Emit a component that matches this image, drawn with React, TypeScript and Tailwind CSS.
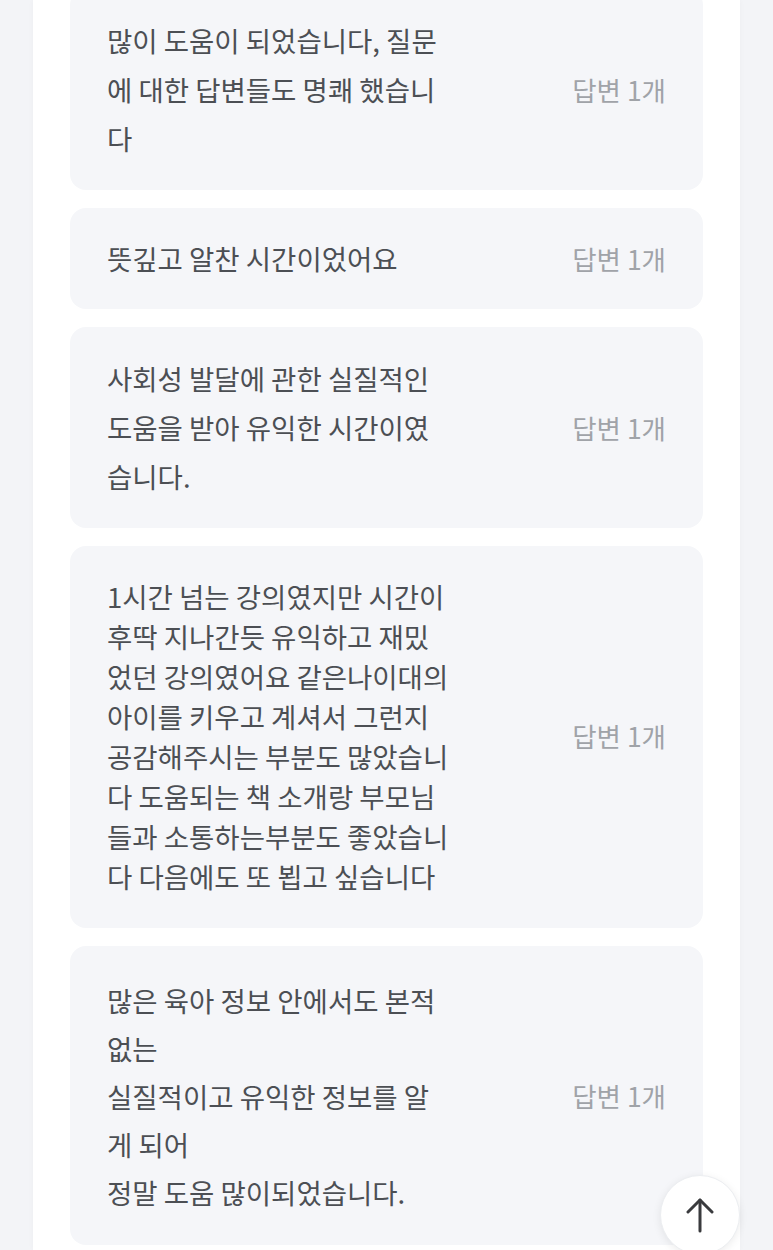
import React from "react";

type Review = {
  lines: string[];
  lineHeight: string;
  padding: string;
};

const reviews: Review[] = [
  {
    lines: ["많이 도움이 되었습니다, 질문", "에 대한 답변들도 명쾌 했습니", "다"],
    lineHeight: "leading-[49px]",
    padding: "py-[27px]",
  },
  {
    lines: ["뜻깊고 알찬 시간이었어요"],
    lineHeight: "leading-[49px]",
    padding: "py-[26px]",
  },
  {
    lines: ["사회성 발달에 관한 실질적인", "도움을 받아 유익한 시간이였", "습니다."],
    lineHeight: "leading-[49px]",
    padding: "py-[27px]",
  },
  {
    lines: [
      "1시간 넘는 강의였지만 시간이",
      "후딱 지나간듯 유익하고 재밌",
      "었던 강의였어요 같은나이대의",
      "아이를 키우고 계셔서 그런지",
      "공감해주시는 부분도 많았습니",
      "다 도움되는 책 소개랑 부모님",
      "들과 소통하는부분도 좋았습니",
      "다 다음에도 또 뵙고 싶습니다",
    ],
    lineHeight: "leading-[40px]",
    padding: "pt-[30px] pb-[32px]",
  },
  {
    lines: [
      "많은 육아 정보 안에서도 본적",
      "없는",
      "실질적이고 유익한 정보를 알",
      "게 되어",
      "정말 도움 많이되었습니다.",
    ],
    lineHeight: "leading-[48px]",
    padding: "pt-[30px] pb-[29px]",
  },
];

const ReviewCard = ({ review }: { review: Review }) => {
  return (
    <div
      className={`flex items-center justify-between rounded-[16px] bg-[#f5f6f9] pl-[37px] pr-[37px] ${review.padding}`}
    >
      <div className={`text-[27.5px] text-[#4c4f54] ${review.lineHeight}`}>
        {review.lines.map((line, i) => (
          <div key={i} className="whitespace-nowrap">
            {line}
          </div>
        ))}
      </div>
      <span className="whitespace-nowrap text-[26.5px] text-[#a0a3a8]">답변 1개</span>
    </div>
  );
};

export default function App() {
  return (
    <div className="relative h-[1250px] w-[773px] overflow-hidden bg-[#f3f4f7] font-['Noto_Sans_CJK_KR','Noto_Sans',sans-serif]">
      <div className="mx-[33px] flex h-full w-[707px] flex-col bg-white px-[37px] shadow-[0_0_6px_rgba(0,0,0,0.03)]">
        <div className="-mt-[11px] flex flex-col gap-[18px]">
          {reviews.map((review, i) => (
            <ReviewCard key={i} review={review} />
          ))}
        </div>
      </div>
      <button
        aria-label="맨 위로"
        className="absolute left-[660px] top-[1175px] flex h-[80px] w-[80px] items-center justify-center rounded-full border border-[#eceef1] bg-white shadow-[0_2px_8px_rgba(0,0,0,0.08)]"
      >
        <svg width="28" height="36" viewBox="0 0 28 36" fill="none" stroke="#3a3b3e" strokeWidth="3" strokeLinecap="round" strokeLinejoin="round">
          <path d="M14 3V34" />
          <path d="M2 15L14 3L26 15" />
        </svg>
      </button>
    </div>
  );
}
